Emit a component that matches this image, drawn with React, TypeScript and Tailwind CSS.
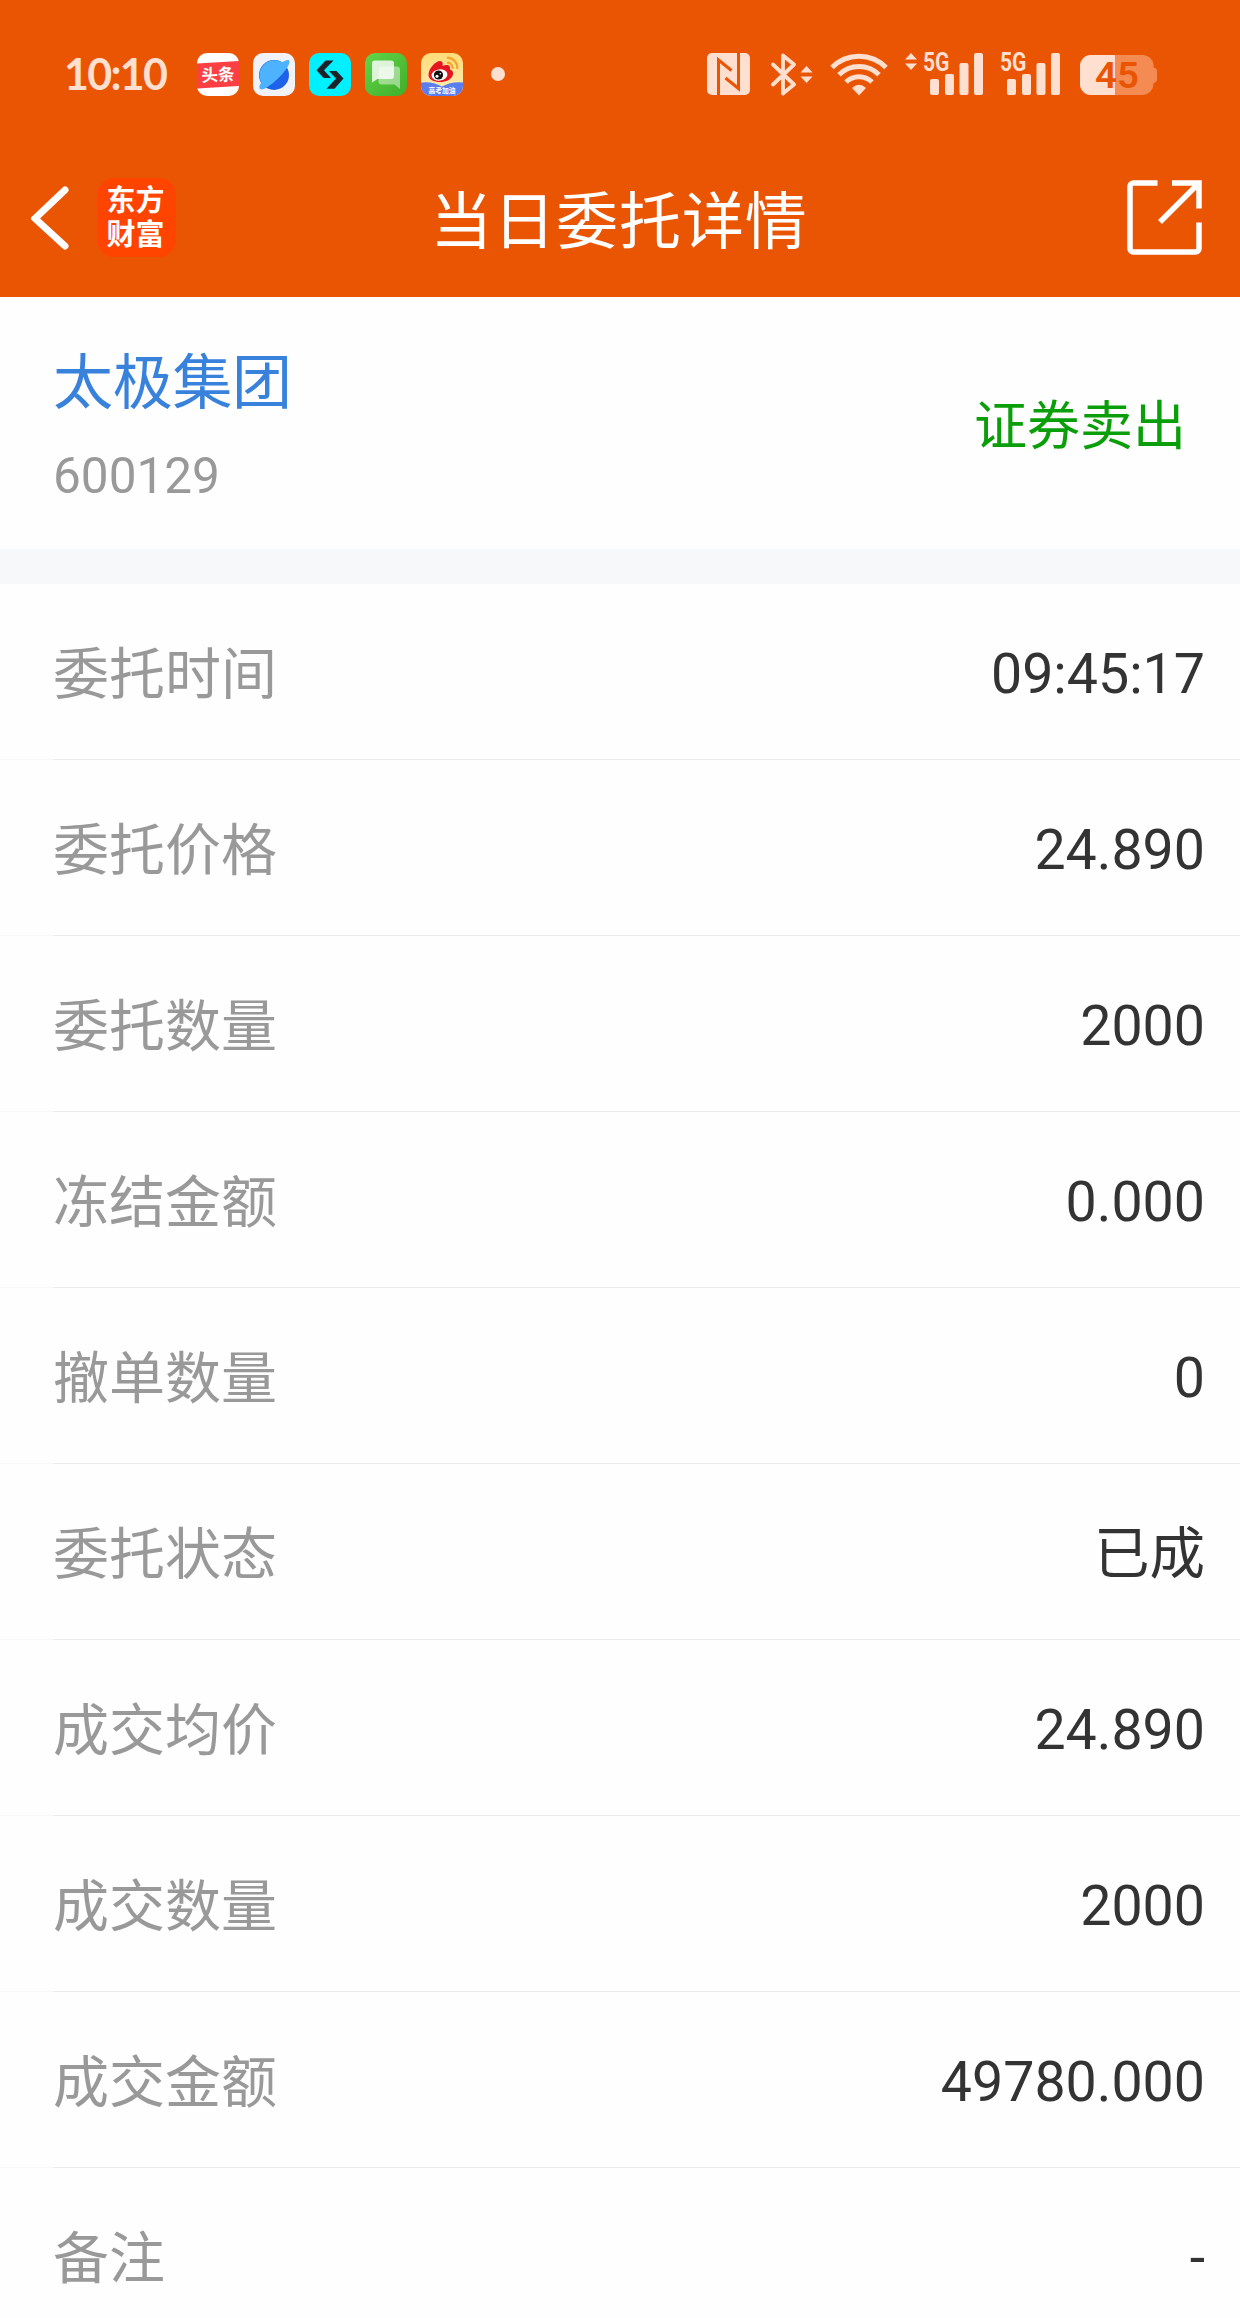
import React from 'react';

const PALE = '#FFDFCF';

const rows: [string, string][] = [
  ['委托时间', '09:45:17'],
  ['委托价格', '24.890'],
  ['委托数量', '2000'],
  ['冻结金额', '0.000'],
  ['撤单数量', '0'],
  ['委托状态', '已成'],
  ['成交均价', '24.890'],
  ['成交数量', '2000'],
  ['成交金额', '49780.000'],
  ['备注', '-'],
];

function ToutiaoIcon() {
  return (
    <svg width="42" height="43" viewBox="0 0 42 43">
      <rect width="42" height="43" rx="10" fill="#fff" />
      <path d="M0 10.500 42 8V33L0 35.500Z" fill="#FB3F42" />
      <text x="21" y="28" textAnchor="middle" fontSize="17" fontWeight="700" fill="#fff" transform="rotate(-3 21 22)" fontFamily="'Noto Sans CJK SC', sans-serif" textLength="33" lengthAdjust="spacingAndGlyphs">头条</text>
    </svg>
  );
}

function PlanetIcon() {
  return (
    <svg width="42" height="43" viewBox="0 0 42 43">
      <rect width="42" height="43" rx="10" fill="#F1F2F5" />
      <circle cx="21" cy="22" r="15" fill="#1F62EA" />
      <path d="M10.500 32.500A15 15 0 0 1 29 9.300C32 7.500 35 6.300 36 7.300C38 10 33 18 25 25.500C17 33 9.500 38 7 36C5.500 34 7 31 8.500 29.500Z" fill="#4DB2FF" />
    </svg>
  );
}

function BitIcon() {
  return (
    <svg width="42" height="43" viewBox="0 0 42 43">
      <rect width="42" height="43" rx="10" fill="#00F0FF" />
      <path d="M16.500 7.500H24.500L15 17.300 22 25H14.500L7.500 17.300ZM20 18H27.500L34.500 25.500 25.500 35.700H17.500L27 25.500Z" fill="#1B2328" />
    </svg>
  );
}

function ChatIcon() {
  return (
    <svg width="42" height="43" viewBox="0 0 42 43">
      <defs>
        <linearGradient id="chat" x1="0" y1="0" x2="1" y2="1">
          <stop offset="0" stopColor="#62D548" />
          <stop offset="1" stopColor="#3FAE2A" />
        </linearGradient>
      </defs>
      <rect width="42" height="43" rx="10" fill="url(#chat)" />
      <path d="M15.500 13.500H32a3 3 0 0 1 3 3V36l-5.500-4.500H16.500a3 3 0 0 1-3-3V16Z" fill="#fff" opacity=".45" />
      <path d="M10 7.500H26a3 3 0 0 1 3 3V23a3 3 0 0 1-3 3H12.500L7 29.500V10.500a3 3 0 0 1 3-3Z" fill="#fff" opacity=".8" />
    </svg>
  );
}

function WeiboIcon() {
  return (
    <svg width="42" height="43" viewBox="0 0 42 43">
      <defs>
        <linearGradient id="wb" x1="0" y1="0" x2="0" y2="1">
          <stop offset="0" stopColor="#FFDC78" />
          <stop offset="1" stopColor="#FFEDB8" />
        </linearGradient>
        <clipPath id="wbc"><rect width="42" height="43" rx="10" /></clipPath>
      </defs>
      <g clipPath="url(#wbc)">
        <rect width="42" height="43" fill="url(#wb)" />
        <path d="M0 29.500Q11 28 21 33.500 31 28 42 29.500V43H0Z" fill="#5A7DF0" />
        <path d="M7.500 22C7.500 15 15 8 19 8c3 0 3 3 2.500 5 4-2 8.500-1.500 7.500 3.500 2.500 1 3.500 2.500 3 5-1 5-7 7.500-13 7.500S7.500 26.500 7.500 22Z" fill="#E5161F" />
        <ellipse cx="18.500" cy="22" rx="8" ry="5.600" fill="#fff" transform="rotate(-8 18.500 22)" />
        <circle cx="17.500" cy="22" r="4.600" fill="#15100F" />
        <circle cx="16" cy="23.200" r="1.500" fill="#fff" />
        <circle cx="19.300" cy="20.800" r=".8" fill="#fff" />
        <path d="M27 4.800A10 10 0 0 1 36.300 15M27 9.800A5 5 0 0 1 31.500 14.800" fill="none" stroke="#F4A52B" strokeWidth="2.400" strokeLinecap="round" />
        <text x="21" y="40" textAnchor="middle" fontSize="6.800" fontWeight="700" fill="#fff" fontFamily="'Noto Sans CJK SC', sans-serif">高考加油</text>
      </g>
    </svg>
  );
}

function NfcIcon() {
  return (
    <svg width="43" height="42" viewBox="0 0 43 42">
      <rect width="43" height="42" rx="5" fill={PALE} />
      <path d="M11.500 42V7L24.500 17.500M31.500 0V35.500L18.500 25" fill="none" stroke="#EA5504" strokeWidth="3" />
    </svg>
  );
}

function Arrows() {
  return <path d="M6 0 12 6.500H0ZM0 10.500H12L6 17Z" fill={PALE} />;
}

function BluetoothIcon() {
  return (
    <svg width="42" height="43" viewBox="0 0 42 43">
      <path d="M2 11.500 23 31.500 12 40.500V2.500L23 11.500 2 31.500" fill="none" stroke={PALE} strokeWidth="3.800" strokeLinecap="round" strokeLinejoin="round" />
      <g transform="translate(29.500 13)"><Arrows /></g>
    </svg>
  );
}

function WifiIcon() {
  return (
    <svg width="58" height="43" viewBox="0 0 58 43">
      <g fill="none" stroke={PALE} strokeWidth="5">
        <path d="M2 14.500A38 38 0 0 1 56 14.500" />
        <path d="M9 21.700A28.500 28.500 0 0 1 49 21.700" />
        <path d="M16 29A18.500 18.500 0 0 1 42 29" />
      </g>
      <path d="M22 35Q29 28.500 36 35L29 42.500Z" fill={PALE} />
    </svg>
  );
}

function SignalIcon() {
  return (
    <svg width="60" height="60" viewBox="0 -8 60 60">
      <text x="0" y="18.500" fontSize="25" fontWeight="700" fill={PALE} fontFamily="Roboto, sans-serif" textLength="26.500" lengthAdjust="spacingAndGlyphs">5G</text>
      <g fill={PALE}>
        <rect x="7" y="27" width="9" height="16" rx="2" />
        <rect x="22" y="22" width="9" height="21" rx="2" />
        <rect x="36.500" y="11" width="9" height="32" rx="2" />
        <rect x="51" y="1" width="9" height="42" rx="2" />
      </g>
    </svg>
  );
}

function BatteryIcon() {
  return (
    <svg width="77" height="56" viewBox="0 -8 77 56">
      <defs><clipPath id="bat"><rect width="35" height="40" /></clipPath></defs>
      <path d="M11 0H63a11 11 0 0 1 10.500 9V12.500a4 4 0 0 1 3.500 4V24a4 4 0 0 1-3.500 4V29A11 11 0 0 1 63 40H11A11 11 0 0 1 0 29V11A11 11 0 0 1 11 0Z" fill="#F48B52" />
      <rect width="73" height="40" rx="11" fill={PALE} clipPath="url(#bat)" />
      <text x="15" y="33" fontSize="37" fontWeight="600" fill="#EA5504" fontFamily="Roboto, sans-serif" textLength="44" lengthAdjust="spacingAndGlyphs">45</text>
    </svg>
  );
}

function StatusBar() {
  return (
    <div className="flex h-[150px] items-center pb-[2px] pl-[64px] pr-[83px]">
      <span className="w-[133px] pb-[2px] font-['Lato'] text-[43px] font-bold leading-none tracking-[-1.7px] text-[#FFDFCF]">10:10</span>
      <div className="flex items-center gap-[14px]">
        <ToutiaoIcon />
        <PlanetIcon />
        <BitIcon />
        <ChatIcon />
        <WeiboIcon />
      </div>
      <span className="ml-[28px] size-[14px] rounded-full bg-[#FFDFCF]" />
      <div className="ml-auto flex items-center">
        <NfcIcon />
        <span className="ml-[21px]"><BluetoothIcon /></span>
        <span className="ml-[17px]"><WifiIcon /></span>
        <svg className="mb-[26px] ml-[17px]" width="12" height="17" viewBox="0 0 12 17"><Arrows /></svg>
        <span className="ml-[6px]"><SignalIcon /></span>
        <span className="ml-[17px]"><SignalIcon /></span>
        <span className="ml-[20px] pt-px"><BatteryIcon /></span>
      </div>
    </div>
  );
}

function TitleBar() {
  return (
    <div className="flex h-[147px] items-start justify-between pl-[31px] pr-[38px]">
      <div className="flex w-[180px] items-center gap-[28px] pt-[28px]">
        <svg width="38" height="64" viewBox="0 0 38 64">
          <path d="M34 4 4 32.500 34 60" fill="none" stroke="#fff" strokeWidth="7" strokeLinecap="round" strokeLinejoin="miter" />
        </svg>
        <div className="flex h-[79px] w-[79px] items-center justify-center rounded-[17px] bg-[#FF4400] pb-[5px] pr-[2px] font-['Noto_Sans_CJK_SC',sans-serif] text-[29px] font-bold leading-[34px] text-white">
          <span className="w-[58px] whitespace-pre-line">{'东方\n财富'}</span>
        </div>
      </div>
      <h1 className="mr-[-5px] pt-[28px] text-[62px] leading-[90px] tracking-[0.9px] text-white">当日委托详情</h1>
      <div className="flex w-[180px] justify-end pt-[30px]">
        <svg width="75" height="75" viewBox="0 0 75 75">
          <path d="M30.500 3H6.500a3.500 3.500 0 0 0-3.500 3.500V68.500a3.500 3.500 0 0 0 3.500 3.500H68.500a3.500 3.500 0 0 0 3.500-3.500V42.500M45 3H72V28.500M72 3 33 42" fill="none" stroke="#fff" strokeWidth="5.500" />
        </svg>
      </div>
    </div>
  );
}

export default function App() {
  return (
    <div className="h-[2318px] w-[1240px] overflow-hidden bg-[#FEFEFE] font-['Roboto','Noto_Sans_CJK_SC',sans-serif]">
      <header className="h-[297px] bg-[#EA5504]">
        <StatusBar />
        <TitleBar />
      </header>
      <section className="flex h-[252px] items-center justify-between pl-[53px] pr-[54px] pt-[8px]">
        <div className="flex flex-col">
          <span className="text-[60px] leading-[88px] tracking-[-0.3px] text-[#3882DC]">太极集团</span>
          <span className="mt-[10px] text-[49.5px] leading-[76px] text-[#999999]">600129</span>
        </div>
        <span className="text-[53px] leading-[80px] text-[#0A9F0A]">证券卖出</span>
      </section>
      <div className="h-[35px] bg-[#F6F8FA]" />
      <main>
        {rows.map(([label, value]) => (
          <div key={label} className="flex h-[176px] flex-col">
            <div className="flex flex-1 items-center justify-between pl-[53px] pr-[35px] pt-[5px] text-[56px] leading-[80px]">
              <span className="pt-px text-[#999999]">{label}</span>
              <span className="pt-[2px] text-[55.5px] text-[#333333]">{value}</span>
            </div>
            <div className="flex h-px">
              <div className="w-[53px] bg-[#F7F7F7]" />
              <div className="flex-1 bg-[#EBEBEB]" />
            </div>
          </div>
        ))}
      </main>
    </div>
  );
}
